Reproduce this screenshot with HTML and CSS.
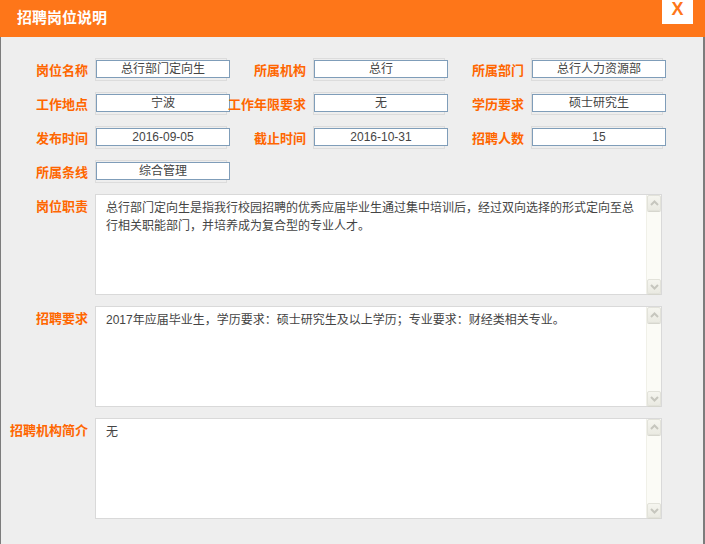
FILE: index.html
```html
<!DOCTYPE html>
<html lang="zh-CN">
<head>
<meta charset="utf-8">
<title>招聘岗位说明</title>
<link rel="stylesheet" href="styles.css">
</head>
<body>
<div class="dialog">
  <div class="dlg-header">
    <div class="dlg-title">招聘岗位说明</div>
    <div class="dlg-close">X</div>
  </div>
  <div class="dlg-body">
    <div class="field-row">
      <div class="field"><span class="field-label">岗位名称</span><div class="input-frame"><div class="input-box">总行部门定向生</div></div></div>
      <div class="field"><span class="field-label">所属机构</span><div class="input-frame"><div class="input-box">总行</div></div></div>
      <div class="field"><span class="field-label">所属部门</span><div class="input-frame"><div class="input-box">总行人力资源部</div></div></div>
    </div>
    <div class="field-row">
      <div class="field"><span class="field-label">工作地点</span><div class="input-frame"><div class="input-box">宁波</div></div></div>
      <div class="field"><span class="field-label">工作年限要求</span><div class="input-frame"><div class="input-box">无</div></div></div>
      <div class="field"><span class="field-label">学历要求</span><div class="input-frame"><div class="input-box">硕士研究生</div></div></div>
    </div>
    <div class="field-row">
      <div class="field"><span class="field-label">发布时间</span><div class="input-frame"><div class="input-box">2016-09-05</div></div></div>
      <div class="field"><span class="field-label">截止时间</span><div class="input-frame"><div class="input-box">2016-10-31</div></div></div>
      <div class="field"><span class="field-label">招聘人数</span><div class="input-frame"><div class="input-box">15</div></div></div>
    </div>
    <div class="field-row">
      <div class="field"><span class="field-label">所属条线</span><div class="input-frame"><div class="input-box">综合管理</div></div></div>
    </div>

    <div class="area-row">
      <span class="field-label area-label">岗位职责</span>
      <div class="area">
        <div class="area-text">总行部门定向生是指我行校园招聘的优秀应届毕业生通过集中培训后，经过双向选择的形式定向至总行相关职能部门，并培养成为复合型的专业人才。</div>
        <div class="scrollbar">
          <div class="sb-btn sb-up"><svg width="9" height="6" viewBox="0 0 9 6"><polyline points="1,5 4.5,1.5 8,5" fill="none" stroke="#c6c6be" stroke-width="2"/></svg></div>
          <div class="sb-track"></div>
          <div class="sb-btn sb-down"><svg width="9" height="6" viewBox="0 0 9 6"><polyline points="1,1 4.5,4.5 8,1" fill="none" stroke="#c6c6be" stroke-width="2"/></svg></div>
        </div>
      </div>
    </div>
    <div class="area-row">
      <span class="field-label area-label">招聘要求</span>
      <div class="area">
        <div class="area-text">2017年应届毕业生，学历要求：硕士研究生及以上学历；专业要求：财经类相关专业。</div>
        <div class="scrollbar">
          <div class="sb-btn sb-up"><svg width="9" height="6" viewBox="0 0 9 6"><polyline points="1,5 4.5,1.5 8,5" fill="none" stroke="#c6c6be" stroke-width="2"/></svg></div>
          <div class="sb-track"></div>
          <div class="sb-btn sb-down"><svg width="9" height="6" viewBox="0 0 9 6"><polyline points="1,1 4.5,4.5 8,1" fill="none" stroke="#c6c6be" stroke-width="2"/></svg></div>
        </div>
      </div>
    </div>
    <div class="area-row">
      <span class="field-label area-label">招聘机构简介</span>
      <div class="area">
        <div class="area-text">无</div>
        <div class="scrollbar">
          <div class="sb-btn sb-up"><svg width="9" height="6" viewBox="0 0 9 6"><polyline points="1,5 4.5,1.5 8,5" fill="none" stroke="#c6c6be" stroke-width="2"/></svg></div>
          <div class="sb-track"></div>
          <div class="sb-btn sb-down"><svg width="9" height="6" viewBox="0 0 9 6"><polyline points="1,1 4.5,4.5 8,1" fill="none" stroke="#c6c6be" stroke-width="2"/></svg></div>
        </div>
      </div>
    </div>
  </div>
</div>
</body>
</html>
```

FILE: styles.css
```css
html, body {
  margin: 0;
  padding: 0;
}
body {
  width: 705px;
  height: 544px;
  overflow: hidden;
  background: #ffffff;
  font-family: "Liberation Sans", "Noto Sans CJK SC", sans-serif;
}
.dialog {
  height: 544px;
  display: flex;
  flex-direction: column;
}
.dlg-header {
  height: 37px;
  flex-shrink: 0;
  background: #fe7619;
  display: flex;
  justify-content: space-between;
  align-items: flex-start;
  padding: 0 12px 0 17px;
}
.dlg-title {
  color: #ffffff;
  font-family: "Noto Sans CJK SC", sans-serif;
  font-weight: bold;
  font-size: 15px;
  line-height: 20px;
  padding-top: 7px;
}
.dlg-close {
  width: 31px;
  height: 24px;
  background: #ffffff;
  color: #fe7619;
  font-family: "Liberation Sans", sans-serif;
  font-weight: bold;
  font-size: 18px;
  line-height: 18px;
  text-align: center;
}
.dlg-body {
  flex: 1;
  background: #eeeeee;
  border-left: 1px solid #7c7c7c;
  border-right: 2px solid #7c7c7c;
  padding: 21px 0 0 9px;
}
.field-row {
  display: flex;
  align-items: center;
  height: 23px;
  margin-bottom: 11px;
}
.field {
  display: flex;
  align-items: center;
  width: 218px;
  flex-shrink: 0;
}
.field-label {
  width: 78px;
  flex-shrink: 0;
  margin-right: 7px;
  text-align: right;
  white-space: nowrap;
  color: #ff6600;
  font-family: "Noto Sans CJK SC", sans-serif;
  font-weight: bold;
  font-size: 13px;
  line-height: 16px;
}
.input-frame {
  width: 132px;
  height: 23px;
  box-sizing: border-box;
  border: 1px solid #dcdcdc;
  flex-shrink: 0;
}
.input-box {
  width: 134px;
  height: 18px;
  box-sizing: border-box;
  margin-top: 1px;
  border: 1px solid #7f9db9;
  background: #ffffff;
  color: #444444;
  font-size: 12px;
  line-height: 16px;
  text-align: center;
  white-space: nowrap;
}
.area-row {
  display: flex;
  align-items: flex-start;
  margin-bottom: 11px;
}
.area-label {
  padding-top: 4px;
}
.area {
  width: 567px;
  height: 101px;
  box-sizing: border-box;
  border: 1px solid #d9d9d9;
  background: #ffffff;
  display: flex;
}
.area-text {
  flex: 1;
  padding: 4px 10px;
  color: #444444;
  font-size: 12px;
  line-height: 18px;
}
.scrollbar {
  width: 15px;
  flex-shrink: 0;
  box-sizing: border-box;
  display: flex;
  flex-direction: column;
  background: #fbfbf6;
  border-left: 1px solid #f0f0e8;
}
.sb-btn {
  box-sizing: border-box;
  border: 1px solid #e2e2da;
  border-radius: 2px;
  background: linear-gradient(#f5f5ef, #eaeae2);
  display: flex;
  align-items: center;
  justify-content: center;
}
.sb-up {
  height: 16px;
  box-shadow: 0 1px 0 #d6d6ce;
}
.sb-down {
  height: 15px;
  box-shadow: 0 1px 0 #d6d6ce;
}
.sb-track {
  flex: 1;
}
```
